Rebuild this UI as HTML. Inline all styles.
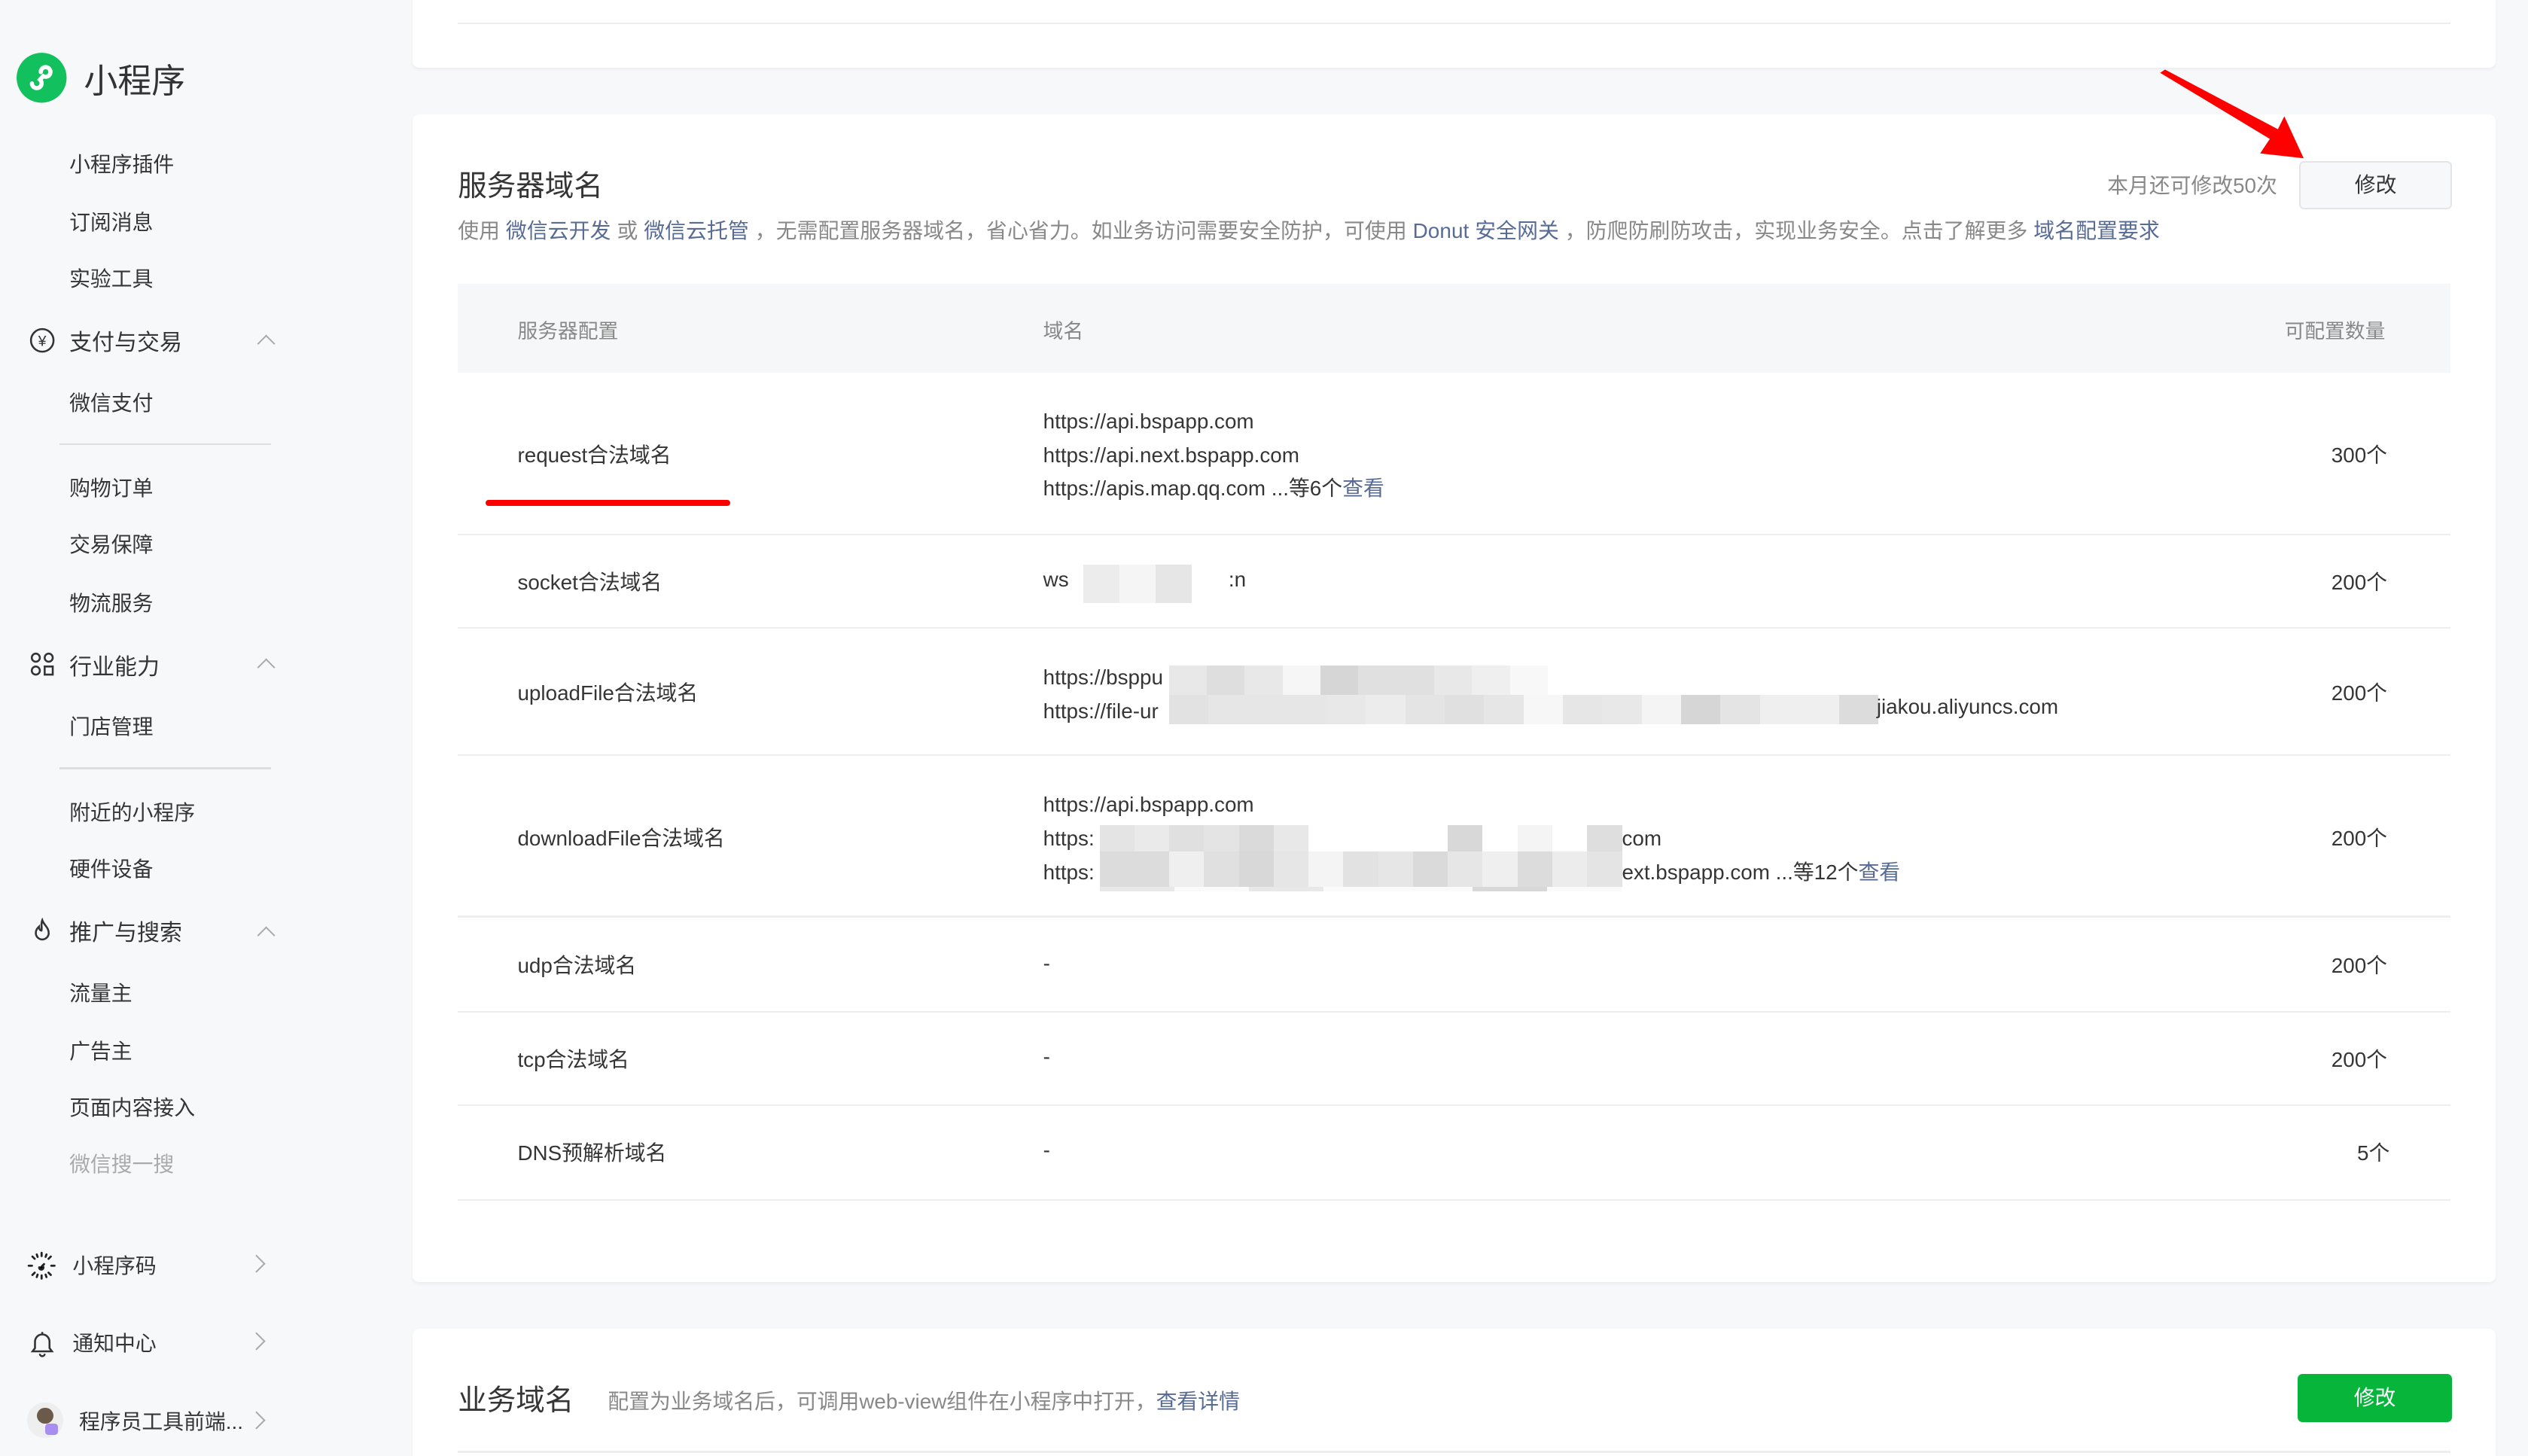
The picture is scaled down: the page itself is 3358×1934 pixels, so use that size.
<!DOCTYPE html>
<html><head><meta charset="utf-8"><style>
*{box-sizing:border-box;margin:0;padding:0}
html,body{width:3358px;height:1934px;overflow:hidden;background:#f7f8fa}
#r{zoom:2.1416;width:1568px;height:903px;position:relative;font-family:"Liberation Sans","Noto Sans CJK SC",sans-serif;color:#353535;overflow:hidden;background:#f7f8fa}
.a{position:absolute;white-space:nowrap}
.card{position:absolute;left:256px;width:1292px;background:#fff;border-radius:4px;box-shadow:0 1px 2px rgba(0,0,0,.05)}
.si{font-size:13px;color:#353535;left:43px}
.sg{font-size:14px;color:#353535;left:43px}
.chev{position:absolute;width:8px;height:8px;border-left:1.3px solid #aaa;border-top:1.3px solid #aaa}
.line{position:absolute;left:37px;width:131px;height:1px;background:#ddd}
.lnk{color:#576b95}
.td{font-size:13px;color:#353535}
.row{position:absolute;left:284px;width:1236px;height:1px;background:#eee}
.m{position:absolute;display:flex}
.m i{display:block;height:100%;flex:1}
</style></head><body><div id="r">
<!-- sidebar -->
<svg class="a" style="left:10px;top:32px" width="32" height="32" viewBox="0 0 32 32"><circle cx="16" cy="16" r="15.5" fill="#12c15e"/><path d="M10 19.5a3 3 0 1 0 5-2.3l2-2.2a3 3 0 1 0-1.5-2.5" fill="none" stroke="#fff" stroke-width="2.6" stroke-linecap="round"/></svg>
<div class="a" style="left:52px;top:33px;font-size:21px;color:#333">小程序</div>
<div class="a si" style="top:92px">小程序插件</div>
<div class="a si" style="top:128px">订阅消息</div>
<div class="a si" style="top:163px">实验工具</div>
<svg class="a" style="left:18px;top:203px" width="16" height="16"><circle cx="8" cy="8" r="7" fill="none" stroke="#333" stroke-width="1.2"/><text x="8" y="11.5" font-size="9" text-anchor="middle" fill="#333" font-family="Liberation Sans">¥</text></svg>
<div class="a sg" style="top:201px">支付与交易</div>
<div class="chev" style="left:161px;top:209px;transform:rotate(45deg)"></div>
<div class="a si" style="top:240px">微信支付</div>
<div class="line" style="top:275px"></div>
<div class="a si" style="top:293px">购物订单</div>
<div class="a si" style="top:328px">交易保障</div>
<div class="a si" style="top:364px">物流服务</div>
<svg class="a" style="left:18px;top:404px" width="16" height="16" fill="none" stroke="#333" stroke-width="1.2"><circle cx="4" cy="4" r="2.5"/><circle cx="12" cy="4" r="2.5"/><circle cx="4" cy="12" r="2.5"/><path d="M9.5 9.5h5v5h-5z"/></svg>
<div class="a sg" style="top:402px">行业能力</div>
<div class="chev" style="left:161px;top:410px;transform:rotate(45deg)"></div>
<div class="a si" style="top:441px">门店管理</div>
<div class="line" style="top:476px"></div>
<div class="a si" style="top:494px">附近的小程序</div>
<div class="a si" style="top:529px">硬件设备</div>
<svg class="a" style="left:18px;top:569px" width="16" height="16" fill="none" stroke="#333" stroke-width="1.2"><path d="M8 1.5c1 3 4 4.5 4 8a4 4 0 0 1-8 0c0-2 1-3 2-4 0 2 1 2.5 1.5 2.5C8 6 7 4 8 1.5z"/></svg>
<div class="a sg" style="top:567px">推广与搜索</div>
<div class="chev" style="left:161px;top:576px;transform:rotate(45deg)"></div>
<div class="a si" style="top:606px">流量主</div>
<div class="a si" style="top:642px">广告主</div>
<div class="a si" style="top:677px">页面内容接入</div>
<div class="a si" style="top:712px;color:#aaa">微信搜一搜</div>
<svg class="a" style="left:17px;top:776px" width="18" height="18" stroke="#222" stroke-width="1.3" stroke-linecap="round"><path d="M9 1v2M9 15v2M1 9h2M15 9h2M3.3 3.3l1.4 1.4M13.3 13.3l1.4 1.4M3.3 14.7l1.4-1.4M13.3 4.7l1.4-1.4M6 2l.5 1.5M12 2l-.5 1.5M6 16l.5-1.5M12 16l-.5-1.5M7.5 10a1.3 1.3 0 1 0 2-1l1-1"/></svg>
<div class="a si" style="top:775px;left:45px">小程序码</div>
<div class="chev" style="left:155px;top:780px;transform:rotate(135deg)"></div>
<svg class="a" style="left:18px;top:824px" width="16" height="18" fill="none" stroke="#333" stroke-width="1.2"><path d="M2 14h12l-1.5-2V8a4.5 4.5 0 0 0-9 0v4zM8 2v1.5M6.5 15.5a1.5 1.5 0 0 0 3 0"/></svg>
<div class="a si" style="top:823px;left:45px">通知中心</div>
<div class="chev" style="left:155px;top:828px;transform:rotate(135deg)"></div>
<div class="a" style="left:17px;top:870px;width:22px;height:22px;border-radius:50%;background:#eee"><div style="position:absolute;left:6px;top:3px;width:10px;height:10px;border-radius:50%;background:#6b5a4a"></div><div style="position:absolute;left:11px;top:13px;width:8px;height:7px;background:#a88ef0;border-radius:2px"></div></div>
<div class="a si" style="top:872px;left:49px">程序员工具前端...</div>
<div class="chev" style="left:155px;top:877px;transform:rotate(135deg)"></div>

<!-- card 1 -->
<div class="card" style="top:-10px;height:52px"><div style="position:absolute;left:28px;right:28px;top:24px;height:1px;background:#eee"></div></div>

<!-- card 2 -->
<div class="card" style="top:71px;height:724px"></div>
<div class="a" style="left:284px;top:101px;font-size:18px;color:#353535">服务器域名</div>
<div class="a" style="left:1307px;top:105px;font-size:13px;color:#888">本月还可修改50次</div>
<div class="a" style="left:1426px;top:100px;width:95px;height:30px;border:1px solid #e3e5e8;border-radius:3px;background:#f7f8fa;font-size:13px;text-align:center;line-height:28px;color:#353535">修改</div>
<div class="a" style="left:284px;top:133px;font-size:13px;color:#888;letter-spacing:0.05px">使用 <span class="lnk">微信云开发</span> 或 <span class="lnk">微信云托管</span> ，无需配置服务器域名，省心省力。如业务访问需要安全防护，可使用 <span class="lnk">Donut 安全网关</span> ，防爬防刷防攻击，实现业务安全。点击了解更多 <span class="lnk">域名配置要求</span></div>
<div class="a" style="left:284px;top:176px;width:1236px;height:55px;background:#f6f7f9"></div>
<div class="a" style="left:321px;top:195px;font-size:12.5px;color:#888">服务器配置</div>
<div class="a" style="left:647px;top:195px;font-size:12.5px;color:#888">域名</div>
<div class="a" style="left:1417px;top:195px;font-size:12.5px;color:#888">可配置数量</div>

<div class="a td" style="left:321px;top:272px">request合法域名</div>
<div class="a td" style="left:647px;top:251px;line-height:21px">https://api.bspapp.com<br>https://api.next.bspapp.com<br>https://apis.map.qq.com ...等6个<span class="lnk">查看</span></div>
<div class="a td" style="left:1446px;top:272px">300个</div>
<div class="a" style="left:301px;top:310px;width:152px;height:4px;background:#f00;border-radius:2px"></div>
<div class="row" style="top:331px"></div>

<div class="a td" style="left:321px;top:351px">socket合法域名</div>
<div class="a td" style="left:647px;top:352px">ws</div>
<div class="m" style="left:672px;top:350px;height:24px;width:67px"><i style="background:#ececec"></i><i style="background:#f5f5f5"></i><i style="background:#e6e6e6"></i></div>
<div class="a td" style="left:762px;top:352px">:n</div>
<div class="a td" style="left:1446px;top:351px">200个</div>
<div class="row" style="top:389px"></div>

<div class="a td" style="left:321px;top:420px">uploadFile合法域名</div>
<div class="a td" style="left:647px;top:410px;line-height:21px">https://bsppu<br>https://file-ur</div>
<div class="m" style="left:725px;top:413px;height:18px;width:235px"><i style="background:#e8e8e8"></i><i style="background:#dedede"></i><i style="background:#e8e8e8"></i><i style="background:#f6f6f6"></i><i style="background:#d6d6d6"></i><i style="background:#e0e0e0"></i><i style="background:#e0e0e0"></i><i style="background:#e8e8e8"></i><i style="background:#efefef"></i><i style="background:#f8f8f8"></i></div>
<div class="m" style="left:725px;top:431px;height:18px;width:440px"><i style="background:#e2e2e2"></i><i style="background:#e6e6e6"></i><i style="background:#e6e6e6"></i><i style="background:#e6e6e6"></i><i style="background:#e8e8e8"></i><i style="background:#ececec"></i><i style="background:#e4e4e4"></i><i style="background:#e0e0e0"></i><i style="background:#e6e6e6"></i><i style="background:#f7f7f7"></i><i style="background:#e6e6e6"></i><i style="background:#e8e8e8"></i><i style="background:#f4f4f4"></i><i style="background:#d6d6d6"></i><i style="background:#e4e4e4"></i><i style="background:#efefef"></i><i style="background:#efefef"></i><i style="background:#dcdcdc"></i></div>
<div class="a td" style="left:1164px;top:431px">jiakou.aliyuncs.com</div>
<div class="a td" style="left:1446px;top:420px">200个</div>
<div class="row" style="top:468px"></div>

<div class="a td" style="left:321px;top:510px">downloadFile合法域名</div>
<div class="a td" style="left:647px;top:489px;line-height:21px">https://api.bspapp.com<br>https:<br>https:</div>
<div class="m" style="left:682px;top:512px;height:16px;width:324px"><i style="background:#e4e4e4"></i><i style="background:#eaeaea"></i><i style="background:#e0e0e0"></i><i style="background:#e4e4e4"></i><i style="background:#dadada"></i><i style="background:#e8e8e8"></i><i style="background:#fff"></i><i style="background:#fff"></i><i style="background:#fff"></i><i style="background:#fff"></i><i style="background:#d8d8d8"></i><i style="background:#fff"></i><i style="background:#f4f4f4"></i><i style="background:#fff"></i><i style="background:#dedede"></i></div>
<div class="m" style="left:682px;top:528px;height:22px;width:324px"><i style="background:#dcdcdc"></i><i style="background:#dcdcdc"></i><i style="background:#efefef"></i><i style="background:#e0e0e0"></i><i style="background:#d8d8d8"></i><i style="background:#e6e6e6"></i><i style="background:#f4f4f4"></i><i style="background:#e2e2e2"></i><i style="background:#e6e6e6"></i><i style="background:#dadada"></i><i style="background:#e6e6e6"></i><i style="background:#efefef"></i><i style="background:#dcdcdc"></i><i style="background:#ececec"></i><i style="background:#e4e4e4"></i></div>
<div class="m" style="left:682px;top:550px;height:3px;width:324px"><i style="background:#e8e8e8"></i><i style="background:#fafafa"></i><i style="background:#e8e8e8"></i><i style="background:#fafafa"></i><i style="background:#fafafa"></i><i style="background:#d8d8d8"></i><i style="background:#fafafa"></i></div>
<div class="a td" style="left:1006px;top:510px;line-height:21px">com<br>ext.bspapp.com ...等12个<span class="lnk">查看</span></div>
<div class="a td" style="left:1446px;top:510px">200个</div>
<div class="row" style="top:568px"></div>

<div class="a td" style="left:321px;top:589px">udp合法域名</div>
<div class="a td" style="left:647px;top:590px">-</div>
<div class="a td" style="left:1446px;top:589px">200个</div>
<div class="row" style="top:627px"></div>
<div class="a td" style="left:321px;top:647px">tcp合法域名</div>
<div class="a td" style="left:647px;top:648px">-</div>
<div class="a td" style="left:1446px;top:647px">200个</div>
<div class="row" style="top:685px"></div>
<div class="a td" style="left:321px;top:705px">DNS预解析域名</div>
<div class="a td" style="left:647px;top:706px">-</div>
<div class="a td" style="left:1462px;top:705px">5个</div>
<div class="row" style="top:744px"></div>

<!-- arrow -->
<svg class="a" style="left:1330px;top:40px" width="110" height="65"><path d="M10 5 L78 46 L72 55 L99 58 L87 32 L83 40 L13 3 Z" fill="#f00"/></svg>

<!-- card 3 -->
<div class="card" style="top:824px;height:100px"></div>
<div class="a" style="left:284px;top:854px;font-size:18px;color:#353535">业务域名</div>
<div class="a" style="left:377px;top:859px;font-size:13px;color:#888">配置为业务域名后，可调用web-view组件在小程序中打开，<span class="lnk">查看详情</span></div>
<div class="a" style="left:1425px;top:852px;width:96px;height:30px;background:#07b53b;border-radius:3px;color:#fff;font-size:13px;text-align:center;line-height:30px">修改</div>
<div class="a" style="left:284px;top:900px;width:1236px;height:1px;background:#eee"></div>
</div></body></html>
